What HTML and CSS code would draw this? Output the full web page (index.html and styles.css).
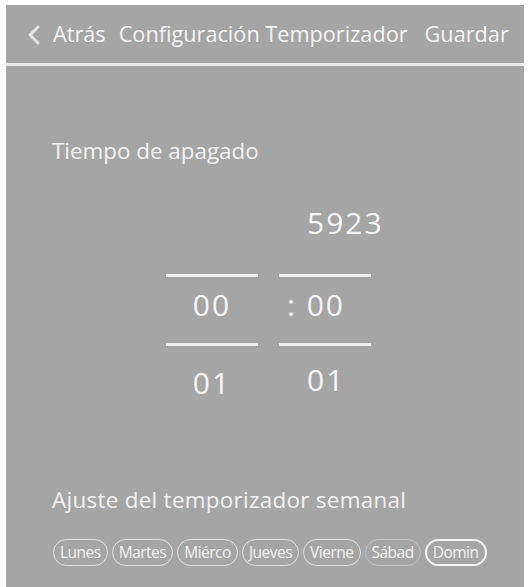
FILE: index.html
```html
<!DOCTYPE html>
<html lang="es">
<head>
<meta charset="utf-8">
<title>Configuración Temporizador</title>
<link rel="stylesheet" href="styles.css">
</head>
<body>
<div class="screen">
  <header class="topbar">
    <svg class="back-icon" width="14" height="20" viewBox="0 0 14 20" aria-hidden="true">
      <polyline points="11,2 3,10 11,18" fill="none" stroke="#e4e4e4" stroke-width="3" stroke-linecap="round" stroke-linejoin="round"/>
    </svg>
    <span class="back-label">Atrás</span>
    <span class="title">Configuración Temporizador</span>
    <span class="save">Guardar</span>
  </header>
  <main class="content">
    <h2 class="section-title off-title">Tiempo de apagado</h2>
    <div class="picker">
      <div class="col col-hours">
        <div class="num num-top"></div>
        <div class="rule rule-first"></div>
        <div class="num num-current">00</div>
        <div class="rule"></div>
        <div class="num num-next">01</div>
      </div>
      <div class="col col-mins">
        <div class="num num-top">5923</div>
        <div class="rule rule-first"></div>
        <div class="num num-current sep">: 00</div>
        <div class="rule"></div>
        <div class="num num-next up">01</div>
      </div>
    </div>
    <h2 class="section-title week-title">Ajuste del temporizador semanal</h2>
    <div class="days">
      <span class="day">Lunes</span>
      <span class="day">Martes</span>
      <span class="day">Miérco</span>
      <span class="day">Jueves</span>
      <span class="day">Vierne</span>
      <span class="day faint">Sábad</span>
      <span class="day strong">Domin</span>
    </div>
  </main>
</div>
</body>
</html>
```
FILE: styles.css
```css
html, body {
  margin: 0;
  padding: 0;
  background: #ffffff;
  height: 100%;
}
body {
  font-family: "Open Sans", "Noto Sans", sans-serif;
  color: #f4f4f4;
}
.screen {
  margin: 5px 5px 0 6px;
  background: #a6a5a6;
  height: 582px;
  display: flex;
  flex-direction: column;
}
.topbar {
  height: 58px;
  display: flex;
  align-items: center;
  padding-left: 21px;
  border-bottom: 3px solid #e9e9e9;
  font-size: 21.7px;
  line-height: 28px;
  white-space: nowrap;
}
.back-icon {
  margin-right: 12px;
  margin-top: 2px;
}
.back-label {
  margin-right: 13px;
}
.title {
  margin-right: 17px;
}
.content {
  padding-left: 46px;
  display: flex;
  flex-direction: column;
}
.section-title {
  margin: 0;
  font-weight: 400;
  font-size: 22.4px;
  line-height: 28px;
  color: #f2f2f2;
}
.off-title {
  margin-top: 71px;
}
.picker {
  display: flex;
  gap: 21px;
  margin-left: 114px;
  margin-top: 40px;
}
.col {
  width: 92px;
  display: flex;
  flex-direction: column;
}
.num {
  height: 36px;
  font-size: 30px;
  line-height: 36px;
  letter-spacing: 2px;
  color: #f6f6f6;
}
.col-hours .num {
  text-align: center;
}
.col-mins .num {
  padding-left: 28px;
}
.col-mins .sep {
  padding-left: 8px;
}
.rule {
  height: 3px;
  background: #f0f0f0;
  margin-top: 20px;
}
.rule-first {
  margin-top: 33px;
}
.num-current {
  margin-top: 10px;
}
.num-next {
  margin-top: 19px;
}
.num-next.up {
  margin-top: 16px;
}
.week-title {
  margin-top: 85px;
  letter-spacing: 0.3px;
}
.days {
  display: flex;
  gap: 4px;
  margin-top: 25px;
  margin-left: 1px;
}
.day {
  height: 27px;
  box-sizing: border-box;
  border: 1.5px solid rgba(245, 245, 245, 0.75);
  border-radius: 14px;
  padding: 0 6px;
  font-size: 15.5px;
  line-height: 24px;
  letter-spacing: -0.5px;
  color: #f2f2f2;
}
.day.faint {
  border-color: rgba(245, 245, 245, 0.35);
}
.day.strong {
  border-color: #f6f6f6;
  border-width: 2px;
  line-height: 23px;
}
```
